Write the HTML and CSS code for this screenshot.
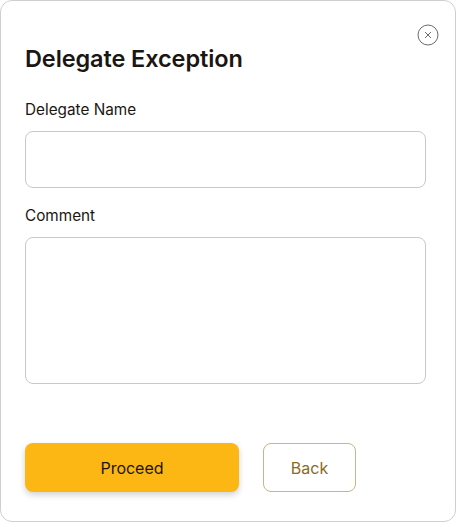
FILE: index.html
```html
<!DOCTYPE html>
<html>
<head>
<meta charset="utf-8">
<link rel="stylesheet" href="styles.css">
</head>
<body>
<div class="modal">
  <button class="close" aria-label="Close">
    <svg width="22" height="22" viewBox="0 0 22 22"><circle cx="11" cy="11" r="10" fill="none" stroke="#6b6b6b" stroke-width="1"/><path d="M8.3 8.3 L13.7 13.7 M13.7 8.3 L8.3 13.7" stroke="#6b6b6b" stroke-width="1" stroke-linecap="round"/></svg>
  </button>
  <h1 class="title">Delegate Exception</h1>
  <label class="label">Delegate Name</label>
  <div class="input"></div>
  <label class="label">Comment</label>
  <div class="textarea"></div>
  <div class="actions">
    <button class="btn primary">Proceed</button>
    <button class="btn secondary">Back</button>
  </div>
</div>
</body>
</html>
```
FILE: styles.css
```css
html, body { margin: 0; padding: 0; background: #fff; }
body { font-family: Inter, "Noto Sans", sans-serif; color: #1a1611; }
.modal {
  position: relative;
  box-sizing: border-box;
  width: 456px;
  height: 522px;
  border: 1px solid #cfcfcf;
  border-radius: 12px;
  padding: 43px 29px 0 24px;
  display: flex;
  flex-direction: column;
}
.close {
  position: absolute;
  top: 23px;
  right: 16px;
  width: 22px;
  height: 22px;
  padding: 0;
  border: none;
  background: none;
  display: flex;
}
.title {
  margin: 0;
  font-size: 23.5px;
  font-weight: 600;
  line-height: 30px;
  letter-spacing: -0.1px;
}
.label {
  margin-top: 26px;
  font-size: 15.3px;
  line-height: 20px;
}
.input, .textarea {
  margin-top: 11px;
  border: 1px solid #c9c9c9;
  border-radius: 8px;
  box-sizing: border-box;
}
.input { height: 57px; }
.textarea { height: 147px; }
.input + .label { margin-top: 18px; }
.actions {
  margin-top: 59px;
  display: flex;
  gap: 24px;
}
.btn {
  height: 49px;
  border-radius: 8px;
  font-family: inherit;
  font-size: 16px;
  box-sizing: border-box;
}
.primary {
  width: 214px;
  background: #fdb714;
  border: none;
  color: #1a1611;
  box-shadow: 0 3px 6px rgba(0,0,0,0.18);
}
.secondary {
  width: 93px;
  background: #fff;
  border: 1px solid #c9b587;
  color: #8a6a1e;
}
```
